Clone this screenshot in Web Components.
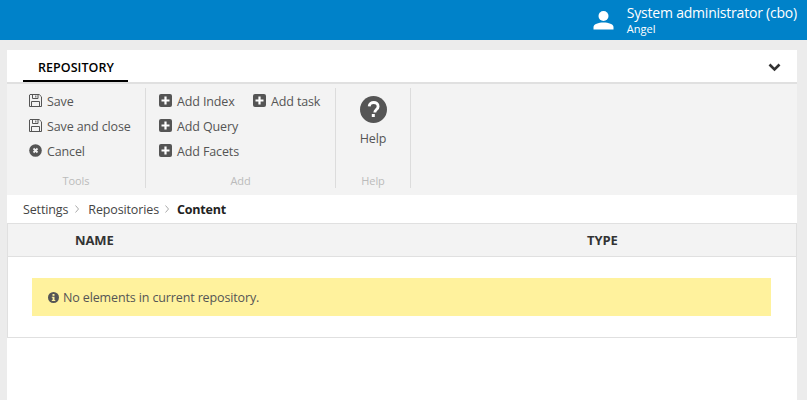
<!DOCTYPE html>
<html><head><meta charset="utf-8"><style>
html,body{margin:0;padding:0;height:100%;overflow:hidden}
body{background:#ececec;font-family:"Open Sans","Noto Sans",sans-serif;font-size:12.500px;letter-spacing:-.13px;color:#555}
</style></head><body>
<app-root></app-root>
<script>
const ICONS={
save:'<svg width="13" height="13" viewBox="0 0 13 13"><path d="M1 .5h9.200l2.300 2.300V12.500H.5V1z" fill="none" stroke="#555" stroke-width="1"/><path d="M3.500 1v3.500h5.500V1M6.800 1.500v2" fill="none" stroke="#555"/><path d="M2.500 12V7.500h8V12" fill="none" stroke="#555"/></svg>',
cancel:'<svg width="13" height="13" viewBox="0 0 13 13"><circle cx="6.500" cy="6.500" r="6.300" fill="#555"/><path d="M4.500 4.500l4 4M8.500 4.500l-4 4" stroke="#f3f3f3" stroke-width="1.800"/></svg>',
plus:'<svg width="13" height="13" viewBox="0 0 13 13"><rect x="0" y="0" width="13" height="13" rx="2" fill="#555"/><path d="M6.500 2.500v8M2.500 6.500h8" stroke="#fff" stroke-width="2.200"/></svg>'
};
function def(name,css,html){
  customElements.define(name,class extends HTMLElement{
    constructor(){super();const r=this.attachShadow({mode:'open'});
      r.innerHTML='<style>'+css+'</style>'+(typeof html==='function'?html(this):html);}
  });
}
def('top-bar',`:host{display:flex;justify-content:flex-end;align-items:center;height:40px;background:#0082c9;color:#fff;padding-right:10px;box-sizing:border-box}
.u{margin-right:13px;display:block}.n{font-size:14px;line-height:18px;letter-spacing:-.21px}.s{font-size:11px;line-height:13px;letter-spacing:0}.t{margin-top:-2px}`,
`<svg class="u" width="21" height="20" viewBox="0 0 21 20"><circle cx="10.500" cy="6" r="5" fill="#fff"/><path d="M.5 19.500v-2.500c0-3 5-4.500 10-4.500s10 1.500 10 4.500v2.500z" fill="#fff"/></svg>
<div class="t"><div class="n">System administrator (cbo)</div><div class="s">Angel</div></div>`);
def('tab-bar',`:host{display:flex;justify-content:space-between;height:34px;box-sizing:border-box;border-bottom:2px solid #e0e0e0;background:#fff;padding-left:16px}
.tab{box-sizing:border-box;height:32px;width:105px;border-bottom:2px solid #000;padding:0 0 0 15px;line-height:35px;font-size:12.500px;letter-spacing:.05px;font-weight:600;color:#000}
svg{margin:13px 16px 0 0}`,
`<div class="tab">REPOSITORY</div><svg width="13" height="9" viewBox="0 0 13 9"><path d="M1.500 1.500l5 5 5-5" fill="none" stroke="#333" stroke-width="2.600"/></svg>`);
def('rb-item',`:host{display:flex;align-items:center;gap:5px;height:25px;padding-top:1px;box-sizing:border-box;white-space:nowrap;color:#555}
.i{display:flex;width:13px;height:13px;margin-top:-2px}`,
el=>`<span class="i">${ICONS[el.getAttribute('icon')]}</span><span><slot></slot></span>`);
def('rb-group',`:host{display:flex;flex-direction:column;box-sizing:border-box;height:100%;border-right:1px solid #dcdcdc}
.c{flex:1;display:flex;box-sizing:border-box}
.l{height:20px;padding-top:5px;box-sizing:border-box;line-height:15px;text-align:center;font-size:11px;letter-spacing:-.1px;color:#bbb}`,
el=>`<div class="c"><slot></slot></div><div class="l">${el.getAttribute('label')}</div>`);
def('rb-col',`:host{display:block}`,`<slot></slot>`);
def('help-btn',`:host{display:flex;flex-direction:column;align-items:center;width:100%;color:#555}
svg{display:block;margin-top:8px}div{margin-top:7px;line-height:18px}`,
`<svg width="27" height="27" viewBox="0 0 27 27"><circle cx="13.500" cy="13.500" r="13.500" fill="#555"/><path d="M9.200 10.300c.3-5 8.900-5.200 8.900.1 0 3.200-3.300 3-3.300 6.100" fill="none" stroke="#fff" stroke-width="2.900"/><rect x="11.800" y="18" width="3" height="3" fill="#fff"/></svg><div>Help</div>`);
def('rb-bar',`:host{display:flex;height:111px;background:#f3f3f3;box-sizing:border-box;padding:4px 0 7px 0}`,`<slot></slot>`);
def('bread-crumb',`:host{display:flex;align-items:center;height:28px;padding-left:16px;background:#fff;color:#444}
svg{display:block;margin:0 9px 0 7px}svg.k{margin:0 8px 0 6px}b{font-weight:700;color:#222;letter-spacing:-.2px}`,
`<span>Settings</span><svg width="4" height="8" viewBox="0 0 4 8"><path d="M.5.5l3 3.500-3 3.500" fill="none" stroke="#aaa"/></svg><span>Repositories</span><svg class="k" width="4" height="8" viewBox="0 0 4 8"><path d="M.5.5l3 3.500-3 3.500" fill="none" stroke="#aaa"/></svg><b>Content</b>`);
def('data-table',`:host{display:block;background:#fff;border:1px solid #e0e0e0;box-sizing:border-box;height:115px}
.h{display:grid;grid-template-columns:579px 1fr;height:32px;background:#f3f3f3;border-bottom:1px solid #e0e0e0;font-weight:700;font-size:13px;letter-spacing:-.1px;color:#333;line-height:32px}
.h span:first-child{padding-left:67px}
.b{padding:21px 25px 0 24px}`,
`<div class="h"><span>NAME</span><span>TYPE</span></div><div class="b"><slot></slot></div>`);
def('msg-box',`:host{display:flex;align-items:center;gap:4px;height:38px;background:#fff29d;padding-left:16px;color:#555}
svg{display:block}`,
`<svg width="11" height="11" viewBox="0 0 11 11"><circle cx="5.500" cy="5.500" r="5.500" fill="#555"/><rect x="4.500" y="2" width="2" height="1.800" fill="#fff2a0"/><path d="M3.800 4.700h2.700v3.200h.8v1H3.800v-1h.8V5.700h-.8z" fill="#fff2a0"/></svg><span><slot></slot></span>`);
def('app-root',`:host{display:block;height:100vh}
.card{background:#fff;margin:10px 10px 0 7px;height:350px}
rb-group.a{width:139px}rb-group.b{width:190px}rb-group.c{width:75px}
rb-group.a rb-col{margin-left:22px}
rb-group.b rb-col{margin-left:13px}rb-group.b rb-col+rb-col{margin-left:14px}`,
`<top-bar></top-bar><div class="card"><tab-bar></tab-bar>
<rb-bar>
<rb-group class="a" label="Tools"><rb-col><rb-item icon="save">Save</rb-item><rb-item icon="save">Save and close</rb-item><rb-item icon="cancel">Cancel</rb-item></rb-col></rb-group>
<rb-group class="b" label="Add"><rb-col><rb-item icon="plus">Add Index</rb-item><rb-item icon="plus">Add Query</rb-item><rb-item icon="plus">Add Facets</rb-item></rb-col><rb-col><rb-item icon="plus">Add task</rb-item></rb-col></rb-group>
<rb-group class="c" label="Help"><help-btn></help-btn></rb-group>
</rb-bar>
<bread-crumb></bread-crumb>
<data-table><msg-box>No elements in current repository.</msg-box></data-table>
</div>`);
</script>
</body></html>
